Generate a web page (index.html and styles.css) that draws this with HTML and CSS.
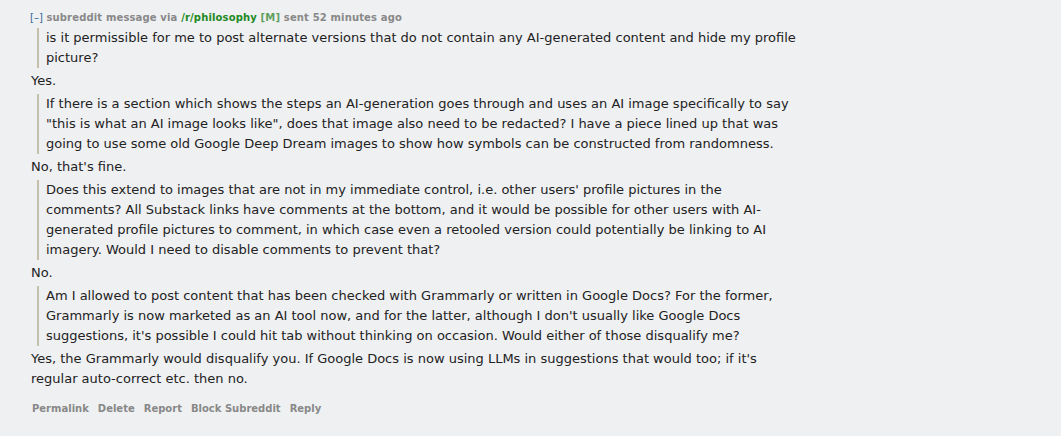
FILE: index.html
```html
<!DOCTYPE html>
<html>
<head>
<meta charset="utf-8">
<link rel="stylesheet" href="styles.css">
</head>
<body>
<div class="message">
  <p class="tagline"><a class="expand">[–]</a> subreddit message via <a class="sr">/r/philosophy</a> <span class="mod">[M]</span> sent 52 minutes ago</p>
  <div class="md">
    <blockquote><p>is it permissible for me to post alternate versions that do not contain any AI-generated content and hide my profile picture?</p></blockquote>
    <p>Yes.</p>
    <blockquote><p>If there is a section which shows the steps an AI-generation goes through and uses an AI image specifically to say "this is what an AI image looks like", does that image also need to be redacted? I have a piece lined up that was going to use some old Google Deep Dream images to show how symbols can be constructed from randomness.</p></blockquote>
    <p>No, that's fine.</p>
    <blockquote><p>Does this extend to images that are not in my immediate control, i.e. other users' profile pictures in the comments? All Substack links have comments at the bottom, and it would be possible for other users with AI-generated profile pictures to comment, in which case even a retooled version could potentially be linking to AI imagery. Would I need to disable comments to prevent that?</p></blockquote>
    <p>No.</p>
    <blockquote><p>Am I allowed to post content that has been checked with Grammarly or written in Google Docs? For the former, Grammarly is now marketed as an AI tool now, and for the latter, although I don't usually like Google Docs suggestions, it's possible I could hit tab without thinking on occasion. Would either of those disqualify me?</p></blockquote>
    <p>Yes, the Grammarly would disqualify you. If Google Docs is now using LLMs in suggestions that would too; if it's regular auto-correct etc. then no.</p>
  </div>
  <ul class="buttons">
    <li>Permalink</li>
    <li>Delete</li>
    <li>Report</li>
    <li>Block Subreddit</li>
    <li>Reply</li>
  </ul>
</div>
</body>
</html>
```
FILE: styles.css
```css
html, body {
  margin: 0;
  padding: 0;
  background: #eff0f2;
}
body {
  font-family: "DejaVu Sans", Verdana, sans-serif;
}
.message {
  padding: 11px 20px 20px 30px;
}
.tagline {
  margin: 0 0 3px 0;
  font-size: 10px;
  font-weight: bold;
  color: #888;
  line-height: 14px;
  letter-spacing: 0.15px;
}
.tagline .expand {
  color: #369;
  font-weight: normal;
  letter-spacing: 0;
}
.tagline .sr {
  color: #228822;
}
.tagline .mod {
  color: #5fa05f;
}
.md {
  width: 766px;
  font-size: 13px;
  line-height: 20px;
  color: #222;
  padding-left: 1px;
}
.md p {
  margin: 0 0 3px 0;
}
.md blockquote {
  margin: 0 0 3px 6px;
  padding: 0 0 0 7px;
  border-left: 2px solid #c5c1ad;
}
.md blockquote p {
  margin: 0;
}
.buttons {
  list-style: none;
  margin: 14px 0 0 0;
  padding: 0 0 0 2px;
  display: flex;
  gap: 9px;
  font-size: 10px;
  font-weight: bold;
  color: #888;
}
```
